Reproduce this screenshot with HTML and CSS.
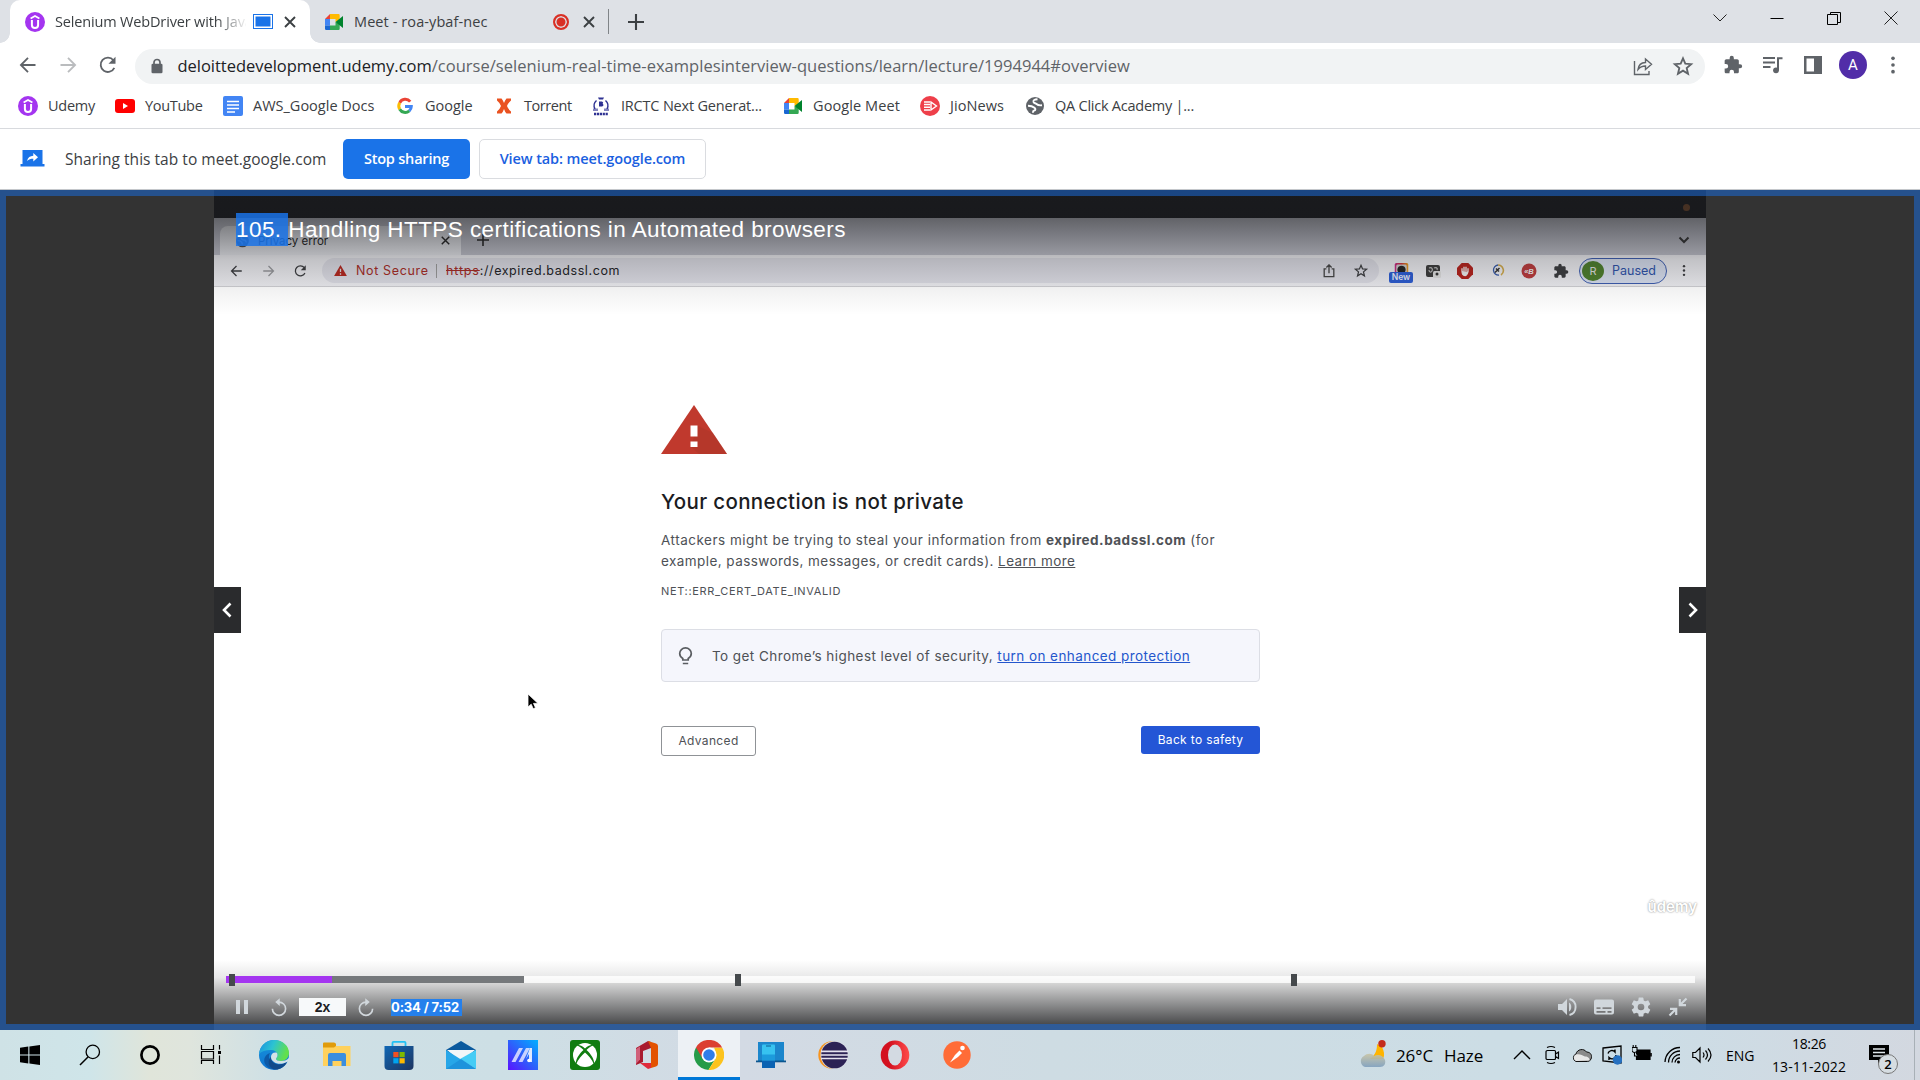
FILE: index.html
```html
<!DOCTYPE html>
<html lang="en">
<head>
<meta charset="utf-8">
<title>Selenium WebDriver with Java</title>
<link rel="stylesheet" href="styles.css">
</head>
<body>
<svg class="defs" width="0" height="0">
  <defs>
    <symbol id="udemy" viewBox="0 0 20 20"><circle cx="10" cy="10" r="10" fill="#a435f0"/><path d="M5.600 6.600 10 4l4.400 2.600" fill="none" stroke="#fff" stroke-width="1.700"/><path d="M6.900 8v5a3.100 3.100 0 0 0 6.200 0V8" fill="none" stroke="#fff" stroke-width="2"/></symbol>
    <symbol id="meet" viewBox="0 0 20 20"><path d="M1 7l5-5v5z" fill="#ea4335"/><path d="M6 2h8.500q1.200 0 1.200 1.200V8L11.500 10V7H6z" fill="#ffba00"/><path d="M1 7h5v6.500H1z" fill="#4285f4"/><path d="M1 13.500h5V18H2.200Q1 18 1 16.800z" fill="#1967d2"/><path d="M6 13.500h5.500V10l4.200 2v4.800q0 1.200-1.200 1.200H6z" fill="#34a853"/><path d="M11.500 10 19 4v12z" fill="#00832d"/></symbol>
    <symbol id="puzzle" viewBox="0 0 24 24"><path d="M20.500 11H19V7c0-1.100-.9-2-2-2h-4V3.500a2.500 2.500 0 0 0-5 0V5H4c-1.100 0-2 .9-2 2v3.800h1.500a2.700 2.700 0 0 1 0 5.400H2V20c0 1.100.9 2 2 2h3.800v-1.500a2.700 2.700 0 0 1 5.400 0V22H17c1.100 0 2-.9 2-2v-4h1.500a2.500 2.500 0 0 0 0-5z" fill="currentColor"/></symbol>
    <symbol id="star" viewBox="0 0 24 24"><path d="M12 3.600l2.500 5.900 6.400.5-4.900 4.200 1.500 6.300L12 17.100l-5.500 3.400L8 14.200 3.100 10l6.400-.5z" fill="none" stroke="currentColor" stroke-width="2"/></symbol>
    <symbol id="back" viewBox="0 0 24 24"><path d="M21 12H4M12 3.500 3.500 12l8.500 8.500" fill="none" stroke="currentColor" stroke-width="2.200"/></symbol>
    <symbol id="fwd" viewBox="0 0 24 24"><path d="M3 12h17M12 3.500l8.500 8.500-8.500 8.500" fill="none" stroke="currentColor" stroke-width="2.200"/></symbol>
    <symbol id="reload" viewBox="0 0 24 24"><path d="M19.600 15.500A8.600 8.600 0 1 1 18.500 6.300" fill="none" stroke="currentColor" stroke-width="2.200"/><path d="M21 2v8.500h-8.500z" fill="currentColor"/></symbol>
    <symbol id="dots" viewBox="0 0 24 24"><circle cx="12" cy="4" r="2.200" fill="currentColor"/><circle cx="12" cy="12" r="2.200" fill="currentColor"/><circle cx="12" cy="20" r="2.200" fill="currentColor"/></symbol>
    <symbol id="x" viewBox="0 0 12 12"><path d="M1 1l10 10M11 1 1 11" stroke="currentColor" stroke-width="1.900"/></symbol>
    <symbol id="plus" viewBox="0 0 16 16"><path d="M8 0v16M0 8h16" stroke="currentColor" stroke-width="2.100"/></symbol>
    <symbol id="replay" viewBox="0 0 24 24"><path d="M12 4.800a8.800 8.800 0 1 1-8.800 8.800" fill="none" stroke="currentColor" stroke-width="2.200"/><path d="M13 -.5v10.500L7 4.800z" fill="currentColor"/></symbol>
  </defs>
</svg>

<header class="tabs">
  <div class="tab tab-active">
    <svg class="fav"><use href="#udemy"/></svg>
    <span class="tab-title fade">Selenium WebDriver with Java</span>
    <span class="capture"></span>
    <svg class="close"><use href="#x"/></svg>
  </div>
  <div class="tab tab-meet">
    <svg class="fav"><use href="#meet"/></svg>
    <span class="tab-title">Meet - roa-ybaf-nec</span>
    <span class="rec"></span>
    <svg class="close"><use href="#x"/></svg>
  </div>
  <span class="tab-sep"></span>
  <svg class="newtab"><use href="#plus"/></svg>
  <div class="winbtns">
    <svg viewBox="0 0 16 16"><path d="M1.500 4.500 8 11l6.500-6.500" fill="none" stroke="#222"/></svg>
    <svg viewBox="0 0 16 16"><path d="M1.500 8.500h13" stroke="#000"/></svg>
    <svg viewBox="0 0 16 16"><path d="M1.500 4.500h10v10h-10zM4.500 4.500v-2h10v10h-3" fill="none" stroke="#000"/></svg>
    <svg viewBox="0 0 16 16"><path d="M1.500 1.500l13 13M14.500 1.500l-13 13" stroke="#222"/></svg>
  </div>
</header>

<nav class="toolbar">
  <svg class="nav-i"><use href="#back"/></svg>
  <svg class="nav-i dim"><use href="#fwd"/></svg>
  <svg class="nav-i"><use href="#reload"/></svg>
  <div class="omni">
    <svg class="lock" viewBox="0 0 12 16"><path d="M3 7V4.500a3 3 0 0 1 6 0V7" fill="none" stroke="#5f6368" stroke-width="1.700"/><rect x=".5" y="5.800" width="11" height="9.500" rx="1.300" fill="#5f6368"/></svg>
    <span class="url"><b>deloittedevelopment.udemy.com</b><span>/course/selenium-real-time-examplesinterview-questions/learn/lecture/1994944#overview</span></span>
    <svg class="o-share" viewBox="0 0 20 20"><path d="M1.500 5v13.500H16V15M5 13.500c.5-4.500 3-6.800 7.500-7V3l6 5.300-6 5.200V10C9 10 7 11 5 13.500z" fill="none" stroke="#5f6368" stroke-width="1.400"/></svg>
    <svg class="o-star"><use href="#star"/></svg>
  </div>
  <div class="actions">
    <svg><use href="#puzzle"/></svg>
    <svg viewBox="0 0 20 20"><path d="M0 3h12M0 7.500h12M0 12h7.500" stroke="#5f6368" stroke-width="1.800"/><path d="M15 15V3.200h4.500" fill="none" stroke="#5f6368" stroke-width="2"/><circle cx="13" cy="15.300" r="2.900" fill="#5f6368"/></svg>
    <svg viewBox="0 0 20 20"><path d="M1 1h18v18H1zM3.500 3.500v13h7.500v-13z" fill="#5f6368" fill-rule="evenodd"/></svg>
    <span class="avatar">A</span>
    <svg><use href="#dots"/></svg>
  </div>
</nav>

<ul class="bookmarks">
  <li><svg><use href="#udemy"/></svg><span>Udemy</span></li>
  <li><svg viewBox="0 0 20 20"><rect y="3" width="20" height="14" rx="3" fill="#f00"/><path d="M8 7v6l5-3z" fill="#fff"/></svg><span>YouTube</span></li>
  <li><svg viewBox="0 0 20 20"><rect width="20" height="20" rx="2" fill="#4285f4"/><path d="M4 5.500h12M4 9h12M4 12.500h12M4 16h8" stroke="#fff" stroke-width="1.600"/></svg><span>AWS_Google Docs</span></li>
  <li><svg viewBox="0 0 20 20"><g fill="none" stroke-width="3"><path d="M15.200 5.600A6.300 6.300 0 0 0 4.700 6.800" stroke="#ea4335"/><path d="M4.700 6.800a6.300 6.300 0 0 0 0 6.400" stroke="#fbbc05"/><path d="M4.700 13.200a6.300 6.300 0 0 0 9.600 1.700" stroke="#34a853"/><path d="M14.300 14.900a6.300 6.300 0 0 0 2-4.400H10" stroke="#4285f4"/></g></svg><span>Google</span></li>
  <li><svg viewBox="0 0 20 20"><path d="M3 2.500h4.500Q9 4 10 7q1-3 2.500-4.500H17v2Q14 7 13 10q1 3 4 5.500v2h-4.500Q11 16 10 13q-1 3-2.500 4.500H3v-2Q6 13 7 10 6 7 3 4.500z" fill="#ea5220"/></svg><span>Torrent</span></li>
  <li><svg viewBox="0 0 20 20"><path d="M5.500 4.500A7 7 0 0 0 4 13M14.500 4.500A7 7 0 0 1 16 13" fill="none" stroke="#2e3192" stroke-width="1.400"/><path d="M7 1.500h6l-1 2H8z" fill="#2e3192"/><path d="M2 12.500h5v2.500H2zM13 12.500h5v2.500h-5z" fill="#2e3192" opacity=".6"/><path d="M3 18h14" stroke="#2e3192" stroke-width="2.600" stroke-dasharray="2.200 .7"/><path d="M8 5.500h3q2 .8.700 2.200 1.800 1.500-.7 2.800H8zM9.500 6.800v2.400" fill="#2e3192"/></svg><span>IRCTC Next Generat...</span></li>
  <li><svg><use href="#meet"/></svg><span>Google Meet</span></li>
  <li><svg viewBox="0 0 20 20"><circle cx="10" cy="10" r="10" fill="#ee3f4a"/><path d="M11 6l5.500 4-5.500 4z" fill="none" stroke="#fff" stroke-width="1.400"/><path d="M4 6h6M4 8.600h6M4 11.300h6M4 14h6" stroke="#fff" stroke-width="1.500"/></svg><span>JioNews</span></li>
  <li><svg viewBox="0 0 20 20"><circle cx="10" cy="10" r="9" fill="#5f6368"/><path d="M12.500 3.200c-3 .3-4.500 1-4 2.800.5 1.500 2 1 3 2s2 1.700 5.500 1.300M3 9.700c3 0 5 .8 6.500 2s1 2.500-.5 3-1 1.300-.8 2" fill="none" stroke="#fff" stroke-width="1.900"/></svg><span>QA Click Academy |...</span></li>
</ul>

<section class="sharing">
  <svg class="cast" viewBox="0 0 24 18"><path d="M2 0h20v14h2v2.500H0V14h2z" fill="#1a73e8"/><path d="M6.500 11c.8-3.500 3-5 6.300-5.200V3l4.700 4.200-4.700 4.200V8.700c-2.500 0-4.500.5-6.300 2.300z" fill="#fff"/></svg>
  <span class="share-text">Sharing this tab to meet.google.com</span>
  <button class="btn stop">Stop sharing</button>
  <button class="btn view">View tab: meet.google.com</button>
</section>

<main class="stage">
  <div class="video">
    <div class="notch"><i></i></div>
    <div class="p-tabs">
      <div class="p-tab">
        <svg class="p-fav" viewBox="0 0 20 20"><circle cx="10" cy="10" r="9" fill="#4a4c50"/><path d="M11 3c-2 0-3 1-3 2.500S9 7 10 8s3 0 4 1 0 2.500 2 2.500M3 9.500c3 0 5 1 6 2.500s1 2 0 3" fill="none" stroke="#bbb" stroke-width="2"/></svg>
        <span class="p-title">Privacy error</span>
        <svg class="p-x"><use href="#x"/></svg>
      </div>
      <svg class="p-plus"><use href="#plus"/></svg>
      <svg class="p-chev" viewBox="0 0 12 12"><path d="M1.500 3.500 6 8l4.500-4.500" fill="none" stroke="#333" stroke-width="2"/></svg>
    </div>
    <div class="p-bar">
      <svg class="p-nav"><use href="#back"/></svg>
      <svg class="p-nav p-dim"><use href="#fwd"/></svg>
      <svg class="p-nav"><use href="#reload"/></svg>
      <div class="p-omni">
        <svg class="p-warn" viewBox="0 0 14 12"><path d="M7 0l7 12H0z" fill="#b3261e"/><path d="M7 4v3.500M7 9v1.500" stroke="#ddd" stroke-width="1.400"/></svg>
        <span class="ns">Not Secure</span><i class="bar"></i>
        <span class="purl"><s>https</s>://expired.badssl.com</span>
        <svg class="p-share" viewBox="0 0 16 16"><path d="M5 5.500H2.500v9h11v-9H11M8 10.500V1.500M5 4l3-3 3 3" fill="none" stroke="#444" stroke-width="1.500"/></svg>
        <svg class="p-star"><use href="#star"/></svg>
      </div>
      <div class="exts">
        <span class="ext-new"><svg viewBox="0 0 18 12"><defs><linearGradient id="rb"><stop stop-color="#c0278a"/><stop offset=".5" stop-color="#c33"/><stop offset="1" stop-color="#e6a020"/></linearGradient></defs><rect width="18" height="14" rx="2" fill="url(#rb)"/><rect x="2" y="2" width="14" height="12" rx="2" fill="#ccc"/><circle cx="9" cy="9" r="5.500" fill="#222"/></svg><em>New</em></span>
        <svg viewBox="0 0 16 16"><rect x="1" y="2" width="14" height="12" rx="2" fill="#3b3b3b"/><path d="M4 5c3-1 4 1 3 3s-3 1-3-1M9 5c2-1 4 0 3 2" stroke="#bbb" fill="none" stroke-width="1.200"/><rect x="8" y="8" width="8" height="7" rx="1.500" fill="#ddd"/><circle cx="12" cy="11" r="1.500" fill="#333"/></svg>
        <svg viewBox="0 0 16 16"><path d="M4.700 0h6.600L16 4.700v6.600L11.300 16H4.700L0 11.300V4.700z" fill="#b3211c"/><path d="M5 8.500V5.300M7 8V3.800M9 8V3.800M11 9V5.300M5 8q0 4.500 3 4.500 2 0 3-4" fill="#eee" stroke="#eee" stroke-width="1.300"/></svg>
        <svg viewBox="0 0 16 16"><path d="M9 2a5 5 0 1 0 1 10" stroke="#3558a8" fill="none" stroke-width="1.300"/><path d="M9 2a5.500 5.500 0 0 1 3 10" stroke="#cfa84a" fill="none" stroke-width="1.600"/><path d="M6 9.500 10.500 5M7 5.500l3 3" stroke="#333" stroke-width="1.500"/></svg>
        <svg viewBox="0 0 16 16"><circle cx="8" cy="8" r="7.500" fill="#b93a3c"/><text x="8" y="10.800" class="e-b">«B</text></svg>
        <svg><use href="#puzzle"/></svg>
      </div>
      <div class="paused"><i>R</i>Paused</div>
      <svg class="p-dots"><use href="#dots"/></svg>
    </div>

    <article class="err">
      <svg class="tri" viewBox="0 0 66 49"><path d="M33 0l33 49H0z" fill="#c0392d"/><path d="M36 20.500 52 28l14 21H38l-8-7z" fill="#a93529" opacity=".45"/><path d="M29.500 20.500h7v11h-7zM29.500 36.500h7v5.500h-7z" fill="#fff"/></svg>
      <h1>Your connection is not private</h1>
      <p class="msg">Attackers might be trying to steal your information from <b>expired.badssl.com</b> (for<br><span>example, passwords, messages, or credit cards). <u>Learn more</u></span></p>
      <p class="code">NET::ERR_CERT_DATE_INVALID</p>
      <div class="tip">
        <svg viewBox="0 0 14 18"><path d="M4.300 13v-1.600C2 10 1.200 8.200 1.200 6.500a5.800 5.600 0 0 1 11.600 0c0 1.700-.8 3.500-3.100 4.900V13zM4.300 16.500h5.400" fill="none" stroke="#5a5d61" stroke-width="1.700"/></svg>
        <span>To get Chrome’s highest level of security, <u>turn on enhanced protection</u></span>
      </div>
      <div class="acts"><span class="adv">Advanced</span><span class="safe">Back to safety</span></div>
    </article>

    <div class="shade-top"></div>
    <div class="shade-bot"></div>
    <div class="lecture"><mark>105. </mark>Handling HTTPS certifications in Automated browsers</div>
    <span class="go go-prev"><svg viewBox="0 0 10 16"><path d="M8.500 1.500 2 8l6.500 6.500" fill="none" stroke="#fff" stroke-width="2.600"/></svg></span>
    <span class="go go-next"><svg viewBox="0 0 10 16"><path d="M1.500 1.500 8 8l-6.500 6.500" fill="none" stroke="#fff" stroke-width="2.600"/></svg></span>
    <svg class="cursor" viewBox="0 0 12 17"><path d="M1 1v13l3.200-2.800 2 4.500 2.300-1-2-4.300H11z" fill="#000" stroke="#fff" stroke-width=".8"/></svg>
    <span class="wm">ûdemy</span>
    <div class="controls">
      <div class="track"><span class="buf"></span><span class="play"></span><i class="m1"></i><i class="m2"></i><i class="m3"></i></div>
      <div class="ctl">
        <svg class="c-pause" viewBox="0 0 12 14"><path d="M0 0h4v14H0zM8 0h4v14H8z" fill="#d1d7dc"/></svg>
        <svg class="c-rep"><use href="#replay"/></svg>
        <span class="speed">2x</span>
        <svg class="c-rep c-fwd"><use href="#replay"/></svg>
        <span class="time">0:34 / 7:52</span>
        <div class="ctl-r">
          <svg viewBox="0 0 20 20"><path d="M1 7v6h4l5 5V2L5 7z" fill="#d1d7dc"/><path d="M12 5.500v9c3-1.500 3-7.500 0-9z" fill="#d1d7dc"/><path d="M12.500 2a8.300 8.300 0 0 1 0 16" fill="none" stroke="#d1d7dc" stroke-width="1.900"/></svg>
          <svg viewBox="0 0 20 20"><path d="M2 2.500h16q2 0 2 2v11q0 2-2 2H2q-2 0-2-2v-11q0-2 2-2zM2.500 10.300v1.700h4v-1.700zM8.500 10.300v1.700h9v-1.700zM2.500 14v1.700h9V14zM13.500 14v1.700h4V14z" fill="#d1d7dc" fill-rule="evenodd"/></svg>
          <svg viewBox="1.500 1.500 21 21"><path d="M19.430 12.980c.04-.32.07-.64.07-.98s-.03-.66-.07-.98l2.110-1.650c.19-.15.24-.42.12-.64l-2-3.460c-.12-.22-.39-.3-.61-.22l-2.490 1c-.52-.4-1.080-.73-1.690-.98l-.38-2.650A.49.490 0 0 0 14 2h-4c-.25 0-.46.18-.49.42l-.38 2.650c-.61.25-1.170.59-1.690.98l-2.490-1c-.23-.09-.49 0-.61.22l-2 3.460c-.13.22-.07.49.12.64l2.110 1.650c-.04.32-.07.65-.07.98s.03.66.07.98l-2.110 1.650c-.19.15-.24.42-.12.64l2 3.460c.12.22.39.3.61.22l2.490-1c.52.4 1.080.73 1.690.98l.38 2.650c.03.24.24.42.49.42h4c.25 0 .46-.18.49-.42l.38-2.650c.61-.25 1.170-.59 1.690-.98l2.490 1c.23.09.49 0 .61-.22l2-3.460c.12-.22.07-.49-.12-.64zM12 15.500a3.500 3.500 0 1 1 0-7 3.500 3.500 0 0 1 0 7z" fill="#d1d7dc"/></svg>
          <svg viewBox="0 0 20 20"><path d="M18.500 1.500 12.500 7.500M11.800 2v6.200H18M1.500 18.500l6-6M2 11.800h6.200V18" fill="none" stroke="#d1d7dc" stroke-width="2.200"/></svg>
        </div>
      </div>
    </div>
  </div>
  <div class="frame"></div>
</main>

<footer class="taskbar">
  <div class="apps">
    <span><svg viewBox="0 0 30 30"><path d="M5 7.800 13.300 6.600V14.400H5zM14.400 6.400 25 5v9.400H14.400zM5 15.500h8.300v7.900L5 22.200zM14.400 15.500H25V25l-10.600-1.500z"/></svg></span>
    <span><svg viewBox="0 0 30 30"><circle cx="17.800" cy="11.900" r="6.700" fill="none" stroke="#000" stroke-width="1.300"/><path d="M13.200 16.800 5 25" stroke="#000" stroke-width="1.500"/></svg></span>
    <span><svg viewBox="0 0 30 30"><circle cx="15" cy="15" r="8.600" fill="none" stroke="#000" stroke-width="2.700"/></svg></span>
    <span><svg viewBox="0 0 30 30"><path d="M5.500 5v4.500h12V5M5.500 24v-3.500h12V24M5.500 11.500h12v7.500h-12zM23.500 5v4.500M23.500 15.500V24" fill="none" stroke="#000" stroke-width="1.200"/><path d="M22 11h3v3h-3z"/></svg></span>
    <span><svg viewBox="0 0 30 30"><defs><linearGradient id="e1" x1="0" y1="0" x2="1" y2=".3"><stop stop-color="#1a8fe0"/><stop offset=".5" stop-color="#2cc3d2"/><stop offset="1" stop-color="#62e04c"/></linearGradient><linearGradient id="e2" x1="0" y1="0" x2="0" y2="1"><stop stop-color="#1795dc"/><stop offset="1" stop-color="#0f73d0"/></linearGradient></defs><circle cx="15" cy="15" r="15" fill="url(#e2)"/><path d="M0 14C1 5 8 0 15 0c9 0 15 6 15 13 0 5-4 8-8 8-3 0-5-1-5-2s1.500-1.500 1.500-4c0-3-3-5-7-5-5 0-9 1.500-11.500 4z" fill="url(#e1)"/><path d="M11 13c-3 5 0 14 9 16-5 1-11 0-14-5-2-5 0-9 5-11z" fill="#0d5aa8"/><path d="M12 17c0 6 6 8.500 11 7 2-.6 3.500-1.500 5-2-2 5-8 8-12 7.500C9 28 8 20 12 17z" fill="#114a8b"/><path d="M17.500 12.500C14 12 12 14 12 17c0 4.500 6 8 12 6.500 2-.5 3.500-1.300 5-2l1.500-.5V17.500c-2.500 3-5.500 3.500-8.500 3.500-3 0-5-1-5-2s1.500-1.500 1.500-4c0-1-.3-2-1-2.500z" fill="#d3e2e7"/></svg></span>
    <span><svg viewBox="0 0 30 30"><path d="M1 3.500h9l3 2.500h15.500v20H1z" fill="#ffd15c"/><path d="M1 3.500q0-1 1-1h10q1.500 0 2 1.500v2l-2 1.500H1z" fill="#e09b0b"/><path d="M6 15q0-2 2-2h14q2 0 2 2v11h-4.500v-5h-9v5H6z" fill="#3b8ede"/></svg></span>
    <span><svg viewBox="0 0 30 30"><defs><linearGradient id="s1" x1="0" y1="0" x2="1" y2="1"><stop stop-color="#0f67b5"/><stop offset="1" stop-color="#1f3560"/></linearGradient></defs><path d="M8.500 7V2.800q0-1 1-1h11q1 0 1 1V7" fill="none" stroke="#22c1f4" stroke-width="1.800"/><path d="M.5 6h29v20q0 4-4 4h-21q-4 0-4-4z" fill="url(#s1)"/><path d="M9.300 12h5.200v5.200H9.300z" fill="#f25022"/><path d="M15.500 12h5.200v5.200h-5.200z" fill="#7fba00"/><path d="M9.300 18.200h5.200v5.200H9.300z" fill="#00a4ef"/><path d="M15.500 18.200h5.200v5.200h-5.200z" fill="#ffb900"/></svg></span>
    <span><svg viewBox="0 0 30 30"><path d="M0 10 15 1l15 9v5H0z" fill="#0b5a9e"/><path d="M1 10h28L15 22z" fill="#f3f6f8"/><path d="M0 10v19h30z" fill="#27a6e8"/><path d="M30 10v19L14 19z" fill="#45ccf5"/><path d="M0 29 15 19l15 10z" fill="#1e93dc"/></svg></span>
    <span><svg viewBox="0 0 30 30"><defs><linearGradient id="a1" x1="0" y1="1" x2="1" y2="0"><stop stop-color="#5b12ff"/><stop offset=".5" stop-color="#2c62fb"/><stop offset="1" stop-color="#00b0ff"/></linearGradient></defs><path d="M0 0h30v30H0z" fill="url(#a1)"/><path d="M3.500 22 11 8h4L7.500 22zM10.500 22 18 8h4l-7.500 14z" fill="#e4e5ff" opacity=".85"/><path d="M22 8h2v14h-3v-8l-3 5z" fill="#dfe9ff"/><circle cx="21" cy="20.500" r="1.800" fill="#fff"/></svg></span>
    <span><svg viewBox="0 0 30 30"><rect width="30" height="30" rx="3" fill="#107c10"/><circle cx="15" cy="15" r="12" fill="#fff"/><path d="M15 8.500C11 5 8 4.500 7 5.500c3 1 5.500 3.300 6.500 4.500C9 14 5 20 6 24.500c2-5 6-9.500 9-12 3 2.500 7 7 9 12 1-4.500-3-10.500-7.500-14.500 1-1.200 3.500-3.500 6.500-4.500-1-1-4-.5-8 3z" fill="#107c10"/></svg></span>
    <span><svg viewBox="0 0 30 30"><path d="M4 8 16 1l3 1v6l-8 3v11l-7 3z" fill="#a91a2e"/><path d="M4 9l4-2.500v13L4 24z" fill="#d0607a"/><path d="M16 1l8 2.500q2 .7 2 2.500v18q0 1.800-2 2.500l-5 1.500V8z" fill="#e35200"/><path d="M8 23h11v5l-3 1z" fill="#e02a3b"/></svg></span>
    <span class="on"><svg viewBox="0 0 30 30"><path d="M2 7.500A15 15 0 0 0 14.500 30L21.500 18.500 15 15z" fill="#259b48"/><path d="M28.100 7.500A15 15 0 0 1 14.500 30l7-11.300q1.500-3.500 0-7.500l-1.500-3.700z" fill="#fcc31e"/><path d="M15 7.500h13.100A15 15 0 0 0 2 7.500l6.500 11z" fill="#dc3e32"/><circle cx="15" cy="15" r="7.500" fill="#fff"/><circle cx="15" cy="15" r="5.800" fill="#2f7de9"/></svg></span>
    <span><svg viewBox="0 0 30 30"><path d="M2 2h26v19H2z" fill="#1b86cc"/><path d="M0 20.500h30v1.800H0z" fill="#0b568f"/><path d="M6 5.500q0-1 1-1h11q1 0 1 1V28H6z" fill="#37c3f0"/><path d="M6 14.500h13v6H6z" fill="#1c9bdc"/><path d="M6 20.500h13V28H6z" fill="#0a62b2"/><path d="M10 6h5" stroke="#0a5a90"/></svg></span>
    <span><svg viewBox="0 0 30 30"><circle cx="14" cy="15" r="13.700" fill="#f7941e"/><circle cx="16.500" cy="15" r="14" fill="#d8dce6"/><circle cx="16.500" cy="15" r="13.300" fill="#2c2255"/><path d="M3 11.300h27M3 15h27M3 18.500h27" stroke="#e6e3f0" stroke-width="1.700"/></svg></span>
    <span><svg viewBox="0 0 30 30"><defs><linearGradient id="o1"><stop offset=".3" stop-color="#d3101f"/><stop offset="1" stop-color="#ff4b4b"/></linearGradient></defs><ellipse cx="15" cy="15" rx="14.300" ry="14.600" fill="url(#o1)"/><ellipse cx="15" cy="15" rx="7" ry="10.500" fill="#d3dae2"/></svg></span>
    <span><svg viewBox="0 0 30 30"><circle cx="15" cy="15" r="13.700" fill="#ff6c37"/><circle cx="20.500" cy="8" r="2.300" fill="#fff"/><path d="M8 22.500 13 15l4.500-4.500 2.500 2.500-4 4z" fill="#fff"/></svg></span>
  </div>
  <div class="tray">
    <svg class="w" viewBox="0 0 28 28"><defs><linearGradient id="w1" x1="0" y1="0" x2="0" y2="1"><stop stop-color="#c9c4a4"/><stop offset="1" stop-color="#7f9fbd"/></linearGradient></defs><path d="M19 4c0 6-1 10-7 15h13c2-4 1-8-1-12z" fill="#ffb400"/><path d="M7 27a6 6 0 0 1-1-11c3-3 8-3 10 0 4-2 9-1 11 4 1 4-1 7-5 7z" fill="url(#w1)" opacity=".9"/><circle cx="24" cy="3.800" r="3.700" fill="#c42b1c"/></svg>
    <span class="wt">26°C</span><span class="wt wt2">Haze</span>
    <div class="sys">
      <svg viewBox="0 0 20 20"><path d="M2 14 10 6l8 8" fill="none" stroke="#000" stroke-width="1.400"/></svg>
      <svg viewBox="0 0 20 20"><path d="M5.500 5.500h7q1 0 1 1v7q0 1-1 1h-7q-1.500 0-1.500-1v-7q0-1 1.500-1zM13.500 9l3-2v6.500l-3-2M5 2.500q4-2 8 0M5 17.500q4 2 8 0" fill="none" stroke="#000" stroke-width="1.200"/></svg>
      <svg viewBox="0 0 20 20"><path d="M4 16.500a4 4 0 0 1 0-7.500c1-5 8-6 10.500-2C19 7 20.500 11 19 14q-1 2.500-3.500 2.500z" fill="#8b8b8b" stroke="#111"/><path d="M4 16a3.500 3.500 0 0 1 0-6.500c4-1 6 1 9 2 3 0 5 2 4.500 4z" fill="#e8e8e8"/></svg>
      <svg viewBox="0 0 20 20"><path d="M1 3 19 1v17L1 16z" fill="none" stroke="#000" stroke-width="1.300"/><path d="M6 8.500a4 4 0 0 1 7-1.500V4.500M14 10a4 4 0 0 1-7 2.500V15" fill="none" stroke="#000" stroke-width="1.400"/><circle cx="15.500" cy="15" r="4.700" fill="#2670c0"/></svg>
      <svg viewBox="0 0 20 20"><path d="M4.500 5h13.500v9.500H4.500z" fill="#000" stroke="#000" stroke-width="1.200"/><path d="M19 8v3.500" stroke="#000" stroke-width="1.600"/><path d="M0 2.500h5v3.500q-2.500 3-5 0zM1.200 0v3M3.800 0v3M2.500 7v4h3" fill="#cfdfe6" stroke="#000" stroke-width="1.100"/></svg>
      <svg viewBox="0 0 20 20"><g fill="none" stroke="#000" stroke-width="1.300"><path d="M3 17A15 15 0 0 1 18 2.500"/><path d="M6.500 17.500A11.500 11.500 0 0 1 18 6"/><path d="M10 17.500A8 8 0 0 1 18 9.500"/><path d="M13 17.500a5 5 0 0 1 5-4.500"/></g><circle cx="16.500" cy="17" r="1.500"/></svg>
      <svg viewBox="0 0 20 20"><path d="M.8 7.500v5h2.700L8 17V3L3.500 7.500zM11 7.500q2 2.500 0 5M13.500 5.500q4 4.500 0 9M16 3.500q6 6.500 0 13" fill="none" stroke="#000" stroke-width="1.200"/></svg>
    </div>
    <span class="eng">ENG</span>
    <div class="clock"><span>18:26</span><span>13-11-2022</span></div>
    <div class="note"><svg viewBox="0 0 20 20"><path d="M0 1h20v15h-7l-4 4v-4H0z"/><path d="M4 5h12M4 8.500h12M4 12h12" stroke="#dfe6ea" stroke-width="1.300"/></svg><b>2</b></div>
  </div>
</footer>
</body>
</html>
```
FILE: styles.css
```css
* { box-sizing: border-box; }
body { margin: 0; width: 1920px; height: 1080px; overflow: hidden; display: flex; flex-direction: column; font-family: "Open Sans", "Noto Sans", sans-serif; background: #fff; color: #3c4043; }
svg { display: block; flex: none; }
.defs { position: absolute; }

/* tab strip */
.tabs { height: 43px; flex: none; background: #dee1e6; display: flex; align-items: center; padding-left: 10px; font-size: 14.500px; }
.tab { height: 43px; display: flex; align-items: center; position: relative; color: #3c4043; }
.tab-active { width: 300px; background: #fff; border-radius: 10px 10px 0 0; padding-left: 15px; }
.tab-active::before, .tab-active::after { content: ""; position: absolute; bottom: 0; width: 10px; height: 10px; }
.tab-active::before { left: -10px; background: radial-gradient(circle at 0 0, transparent 9.500px, #fff 10px); }
.tab-active::after { right: -10px; background: radial-gradient(circle at 100% 0, transparent 9.500px, #fff 10px); }
.fav { width: 20px; height: 20px; }
.tab-title { width: 191px; margin-left: 10px; padding-bottom: 1px; white-space: nowrap; overflow: hidden; letter-spacing: .09px; }
.fade { letter-spacing: -.16px; -webkit-mask-image: linear-gradient(90deg, #000 160px, transparent 193px); mask-image: linear-gradient(90deg, #000 160px, transparent 193px); }
.capture { width: 20px; height: 15px; margin-left: 7px; border: 1.500px solid #1a73e8; background: #1a73e8; box-shadow: inset 0 0 0 1.500px #fff; }
.close { width: 12px; height: 12px; margin-left: 11px; color: #3c4043; }
.tab-meet { width: 298px; padding-left: 14px; }
.tab-meet .tab-title { width: 199px; }
.rec { width: 16px; height: 16px; border-radius: 50%; border: 2px solid #d93025; background: #d93025; box-shadow: inset 0 0 0 1.500px #dee1e6; }
.tab-meet .close { margin-left: 14px; }
.tab-sep { width: 1px; height: 25px; background: #808488; }
.newtab { width: 16px; height: 16px; margin-left: 19px; color: #3c4043; }
.winbtns { margin-left: auto; display: flex; gap: 41px; padding-right: 21px; padding-bottom: 7px; }
.winbtns svg { width: 16px; height: 16px; }

/* toolbar */
.toolbar { height: 44px; flex: none; display: flex; align-items: center; padding-left: 18px; color: #5f6368; }
.nav-i { width: 20px; height: 20px; margin-right: 20px; }
.dim { color: #babcbe; }
.omni { width: 1570px; height: 35px; margin: 2px 0 0 -3px; border-radius: 18px; background: #f1f3f4; display: flex; align-items: center; padding: 0 0 1px 16px; }
.lock { width: 12px; height: 16px; }
.url { margin-left: 14.500px; white-space: nowrap; font-size: 16.500px; color: #5f6368; display: flex; flex: none; width: 1280px; padding-bottom: 1px; letter-spacing: .035px; }
.url b { font-weight: 400; color: #202124; letter-spacing: -.03px; }
.o-share { width: 20px; height: 20px; margin-left: 175px; }
.o-star { width: 22px; height: 22px; margin-left: 19px; }
.actions { display: flex; align-items: center; gap: 20px; margin-left: 18px; }
.actions svg { width: 20px; height: 20px; }
.actions svg:last-child { margin-left: -3px; }
.avatar { width: 28px; height: 28px; margin: 0 -1px 0 -4px; border-radius: 50%; background: #512da8; color: #fff; font: 15px/28px Roboto, sans-serif; text-align: center; }

/* bookmarks */
.bookmarks { height: 42px; flex: none; margin: 0; padding: 0 0 4px 18px; list-style: none; display: flex; align-items: center; border-bottom: 1px solid #d8dade; font-size: 14.500px; }
.bookmarks li { display: flex; align-items: center; gap: 10px; white-space: nowrap; }
.bookmarks svg { width: 20px; height: 20px; }
.bookmarks li:nth-child(1) { width: 97px; letter-spacing: -.26px; }
.bookmarks li:nth-child(2) { width: 108px; letter-spacing: -.3px; }
.bookmarks li:nth-child(3) { width: 172px; }
.bookmarks li:nth-child(4) { width: 99px; }
.bookmarks li:nth-child(5) { width: 97px; letter-spacing: -.45px; }
.bookmarks li:nth-child(6) { width: 192px; letter-spacing: -.19px; }
.bookmarks li:nth-child(7) { width: 137px; letter-spacing: .09px; }
.bookmarks li:nth-child(8) { width: 105px; letter-spacing: .07px; }
.bookmarks li:nth-child(9) { letter-spacing: -.24px; }

/* sharing bar */
.sharing { height: 61px; flex: none; display: flex; align-items: center; padding-left: 20px; border-bottom: 1px solid #c4c7cb; font-size: 15.500px; white-space: nowrap; }
.cast { width: 25px; height: 18px; }
.share-text { width: 278px; margin-left: 20px; letter-spacing: .03px; }
.btn { height: 40px; border-radius: 5px; border: 0; padding: 0 0 2px; font: 600 14.500px "Open Sans", sans-serif; }
.stop { width: 127px; background: #1a73e8; color: #fff; letter-spacing: -.2px; }
.view { width: 227px; margin-left: 9px; background: #fff; border: 1px solid #dadce0; color: #1a60e0; letter-spacing: -.1px; }

/* shared tab contents */
.stage { height: 840px; flex: none; background: #333; position: relative; display: flex; padding-left: 214px; }
.frame { position: absolute; inset: 0; border: 6px solid rgba(26, 106, 212, .56); }
.video { width: 1492px; height: 840px; position: relative; background: #fff; overflow: hidden; font-family: Inter, "Liberation Sans", sans-serif; }
.notch { height: 28px; background: #14151a; display: flex; justify-content: flex-end; padding: 14px 16px 0 0; }
.notch i { width: 7px; height: 7px; border-radius: 50%; background: #8a5029; }
.p-tabs { height: 37px; background: #c0c1cb; display: flex; align-items: center; }
.p-tab { width: 241px; height: 29px; align-self: flex-end; margin-left: 6px; background: #e6e7ec; border-radius: 8px 8px 0 0; display: flex; align-items: center; padding-left: 15px; }
.p-fav { width: 15px; height: 14px; }
.p-title { width: 180px; margin-left: 8px; font-size: 11.500px; color: #222; white-space: nowrap; }
.p-x { width: 9px; height: 9px; margin-left: 3px; color: #222; }
.p-plus { width: 12px; height: 12px; margin: 6px 0 0 16px; color: #222; }
.p-chev { width: 12px; height: 12px; margin: 6px 16px 0 auto; }
.p-bar { height: 32px; background: #ececf0; border-bottom: 1px solid #cfcfd3; display: flex; align-items: center; padding-left: 15px; color: #3a3b3e; }
.p-nav { width: 15px; height: 14px; margin-right: 17px; }
.p-dim { color: #96979b; }
.p-omni { width: 1057px; height: 25px; margin-left: -3px; border-radius: 13px; background: #dcdce4; display: flex; align-items: center; padding-left: 12px; font-size: 12.500px; white-space: nowrap; }
.p-warn { width: 13px; height: 11px; }
.ns { width: 80px; margin-left: 9px; color: #a52a24; letter-spacing: .65px; }
.bar { width: 1px; height: 14px; background: #999; }
.purl { width: 876px; margin-left: 9px; color: #202124; letter-spacing: .58px; }
.purl s { color: #a52a24; letter-spacing: .85px; }
.p-share { width: 14px; height: 14px; }
.p-star { width: 16px; height: 15px; margin-left: 17px; }
.exts { display: flex; gap: 16px; margin-left: 14px; align-items: center; }
.exts > svg { width: 16px; height: 16px; }
.ext-new { width: 16px; height: 24px; display: flex; flex-direction: column; align-items: center; padding-top: 4px; }
.ext-new svg { width: 17px; height: 9px; }
.ext-new em { width: 24px; height: 11px; border-radius: 2px; background: #2b5bd0; color: #e8ecf8; font: 600 8.500px/11px Inter; text-align: center; flex: none; }
.e-b { font: italic bold 7.500px "Liberation Sans"; fill: #eee; text-anchor: middle; }
.paused { width: 88px; height: 26px; margin-left: 10px; border: 1.500px solid #3c5cae; border-radius: 13px; background: #d6dded; display: flex; align-items: center; color: #2c50a8; font-size: 12.500px; padding-left: 2px; }
.paused i { width: 22px; height: 20px; border-radius: 50%; background: #4c7d2c; color: #ddd; font: 11px/20px Inter; text-align: center; margin-right: 8px; }
.p-dots { width: 14px; height: 13px; margin-left: 10px; }

/* privacy interstitial */
.err { width: 599px; margin: 118px 0 0 447px; color: #4e5156; }
.tri { width: 66px; height: 49px; }
.err h1 { margin: 35px 0 0; font: 500 20.500px/26px Inter, sans-serif; letter-spacing: .34px; color: #1b1c1f; white-space: nowrap; }
.msg { margin: 15px 0 0; font-size: 13.500px; line-height: 21px; white-space: nowrap; letter-spacing: .505px; }
.msg span { letter-spacing: .43px; }
.code { margin: 10px 0 0; font-size: 11px; line-height: 18px; letter-spacing: .656px; }
.tip { height: 53px; margin-top: 29px; border: 1px solid #dcdee5; border-radius: 4px; background: #f5f6fc; display: flex; align-items: center; padding-left: 16px; font-size: 13.500px; white-space: nowrap; letter-spacing: .43px; }
.tip svg { width: 15px; height: 18px; margin-right: 19px; }
.tip u { color: #2456cc; }
.acts { margin-top: 44px; display: flex; justify-content: space-between; align-items: flex-start; font-size: 12px; text-align: center; letter-spacing: .35px; }
.adv { width: 95px; height: 30px; line-height: 28px; border: 1px solid #8f9296; border-radius: 3px; }
.safe { width: 119px; height: 28px; line-height: 28px; border-radius: 3px; background: #2456d6; color: #fff; }

/* player overlays */
.shade-top { position: absolute; inset: 0 0 auto; height: 125px; background: linear-gradient(rgba(28, 29, 31, .68), rgba(28, 29, 31, .58) 22%, rgba(28, 29, 31, .2) 56%, rgba(28, 29, 31, .06) 80%, transparent); }
.shade-bot { position: absolute; inset: auto 0 0; height: 70px; background: linear-gradient(transparent, rgba(28, 29, 31, .1) 25%, rgba(28, 29, 31, .8) 92%); }
.lecture { position: absolute; left: 22px; top: 23px; font: 22.500px/33px "Liberation Sans"; letter-spacing: .44px; color: #fff; white-space: nowrap; }
.lecture mark { background: #1a73e8d9; color: #fff; display: inline-block; white-space: pre; }
.go { position: absolute; top: 397px; width: 27px; height: 46px; background: #2a2b2d; display: flex; align-items: center; justify-content: center; }
.go svg { width: 10px; height: 16px; }
.go-prev { left: 0; padding-right: 1px; }
.go-next { right: 0; }
.cursor { position: absolute; left: 313px; top: 503px; width: 12px; height: 17px; }
.wm { position: absolute; right: 9px; top: 707px; font: 600 15px/20px Inter; color: #fff; text-shadow: 0 0 2px #777; }
.controls { position: absolute; left: 12px; right: 11px; bottom: 0; height: 56px; }
.track { height: 7px; margin-top: 2px; background: rgba(255, 255, 255, .8); position: relative; }
.track span, .track i { position: absolute; top: 0; height: 7px; }
.buf { left: 0; width: 298px; background: #75787b; }
.play { left: 0; width: 106px; background: #a435f0; }
.track i { width: 6px; height: 12px; top: -2px; background: #45494c; }
.m1 { left: 3px; }
.m2 { left: 509px; }
.m3 { left: 1065px; }
.ctl { height: 20px; margin-top: 14px; display: flex; align-items: center; padding-left: 10px; color: #d1d7dc; }
.c-pause { width: 12px; height: 14px; }
.c-rep { width: 18px; height: 19px; margin-left: 22px; overflow: visible; }
.speed { width: 47px; height: 18px; margin-left: 11px; background: #f7f9fa; color: #1c1d1f; font: bold 14px/18px "Liberation Sans"; text-align: center; }
.c-fwd { margin-left: 11px; transform: scaleX(-1); }
.time { width: 71px; height: 17px; margin-left: 16px; background: #2580ec; color: #fff; font: bold 13px/17px Inter; letter-spacing: -.13px; white-space: nowrap; }
.ctl-r { display: flex; gap: 17px; margin-left: auto; padding-right: 7px; }
.ctl-r svg { width: 20px; height: 20px; }

/* taskbar */
.taskbar { height: 50px; flex: none; display: flex; justify-content: space-between; background: linear-gradient(90deg, #cfe2e6, #cfe5e9 90px, #e0e5da 150px, #dfe5dd 190px, #cfe0e5 270px, #cddfe5 500px, #d3dae4 740px, #cedce3 1050px, #ccdde5 1500px, #ccdde6 1650px, #d3d8e0); color: #000; }
.apps { display: flex; }
.apps span { width: 62px; height: 50px; display: flex; align-items: center; justify-content: center; }
.apps span:first-child, .apps span:nth-child(2), .apps span:nth-child(3) { width: 60px; }
.apps span:nth-child(5) { width: 64px; }
.apps svg { width: 30px; height: 30px; }
.apps .on { background: #edf1f5; border-bottom: 3px solid #0078d7; padding-top: 3px; }
.tray { display: flex; align-items: center; white-space: nowrap; }
.w { width: 28px; height: 28px; margin-top: -3px; }
.wt { width: 48px; margin-left: 10px; font-size: 17px; letter-spacing: -.1px; }
.wt2 { width: 68px; margin-left: 0; }
.sys { display: flex; gap: 10px; }
.sys svg { width: 20px; height: 20px; }
.eng { width: 45px; margin-left: 14px; font-size: 14px; }
.clock { width: 76px; height: 50px; display: flex; flex-direction: column; align-items: center; font-size: 14px; line-height: 23px; padding-top: 2px; letter-spacing: .1px; }
.clock span:first-child { letter-spacing: -.34px; }
.note { width: 46px; height: 50px; margin-left: 22px; padding-top: 14px; position: relative; border-right: 1px solid #a8b0b6; margin-right: 5px; }
.note svg { width: 20px; height: 20px; }
.note b { position: absolute; left: 9px; top: 24px; width: 20px; height: 20px; border: 1px solid #777; border-radius: 50%; background: #d6dde2; font: 600 13px/18px "Open Sans"; text-align: center; }
```
